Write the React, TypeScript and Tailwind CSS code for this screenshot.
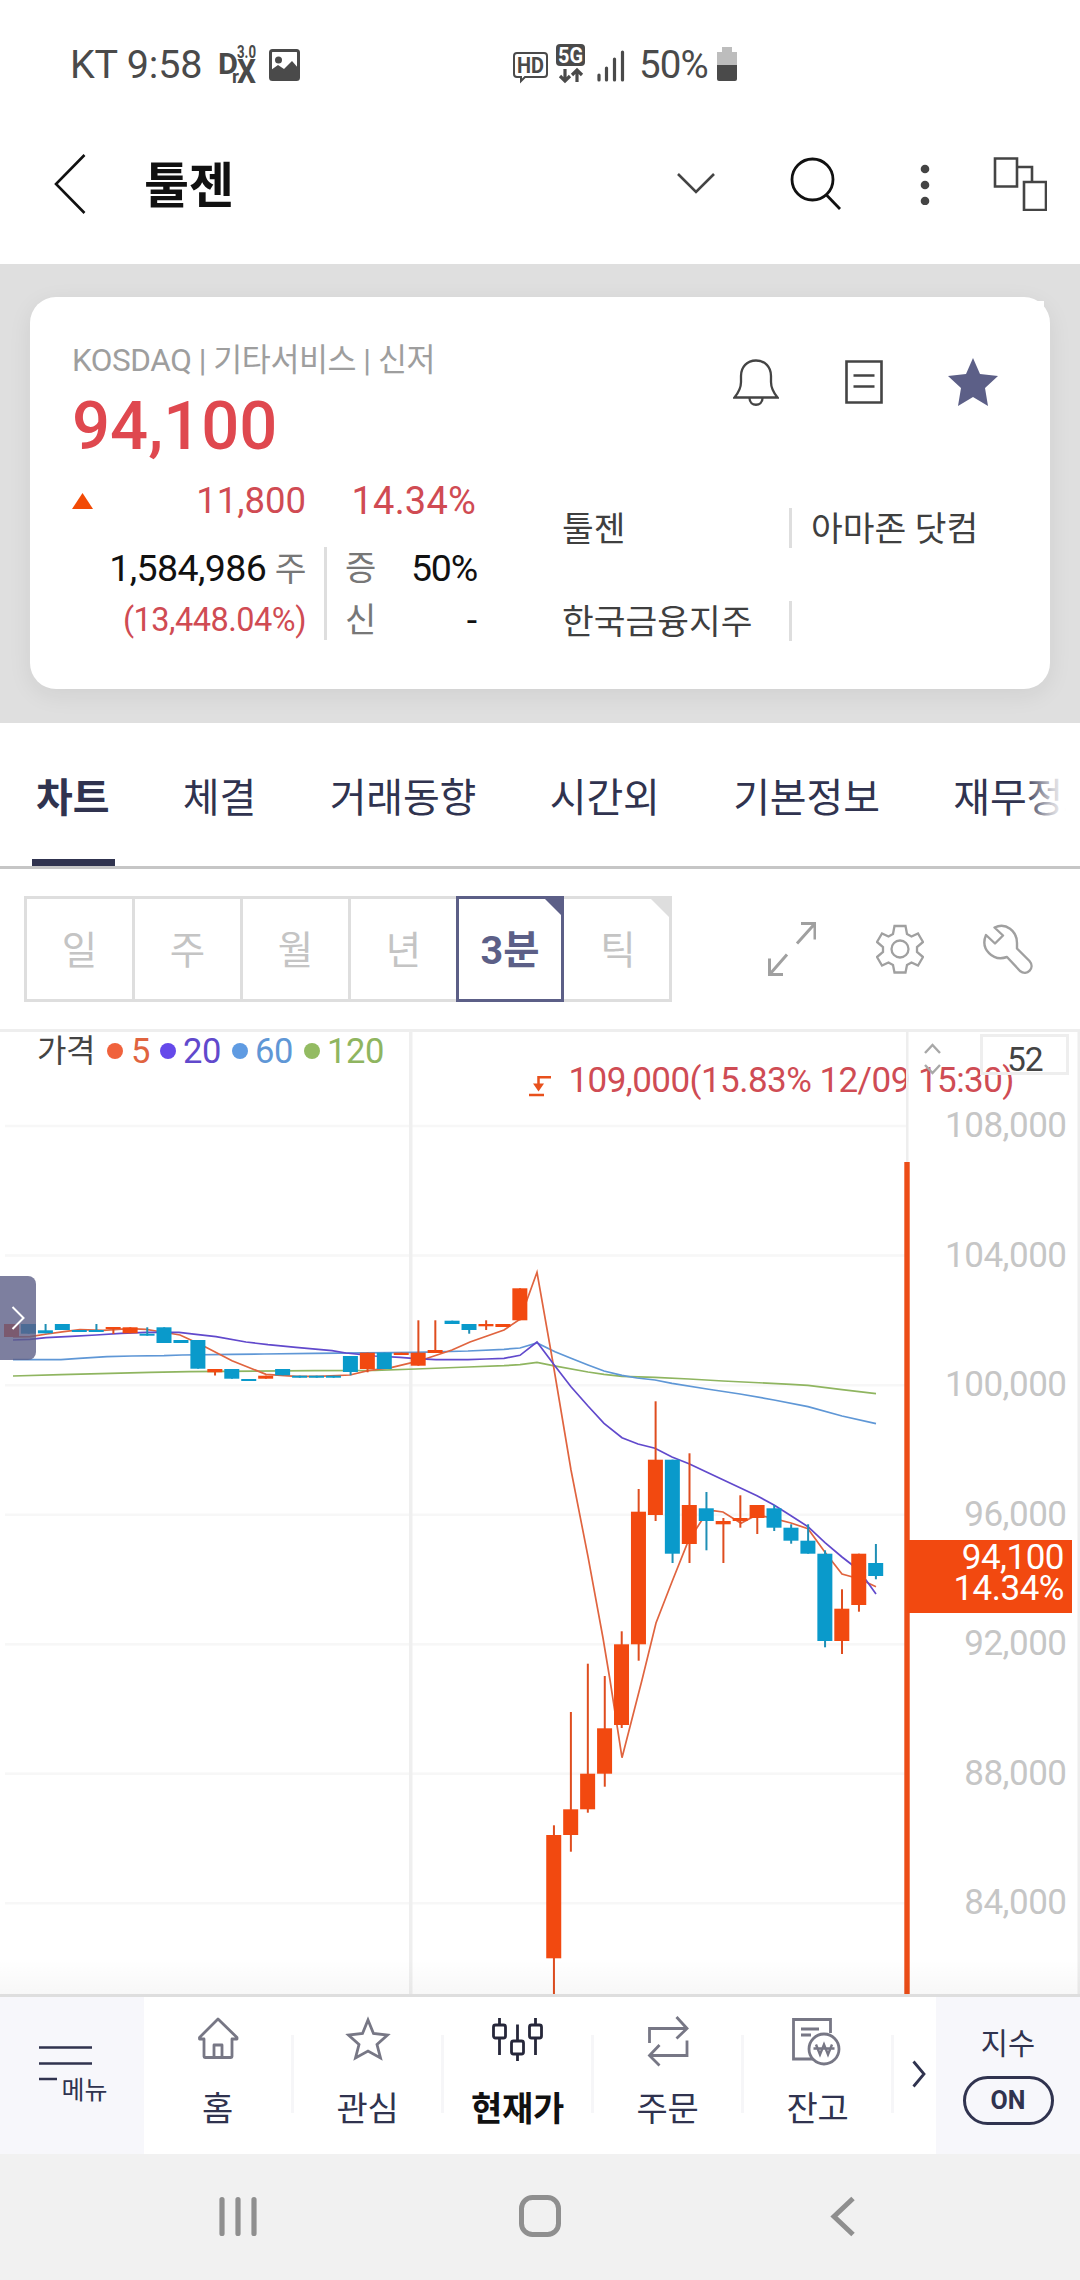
import type { ReactNode } from "react";

type Candle = {
  i: number;
  up: boolean;
  top: number;
  bottom: number;
  high?: number;
  low?: number;
};

const CANDLES: Candle[] = [
  { i: 0, up: true, top: 1324, bottom: 1337 },
  { i: 1, up: false, top: 1324, bottom: 1333.7 },
  { i: 2, up: false, top: 1330.3, bottom: 1333.3, high: 1324 },
  { i: 3, up: false, top: 1324, bottom: 1330 },
  { i: 4, up: false, top: 1330, bottom: 1332 },
  { i: 5, up: false, top: 1330, bottom: 1332, high: 1324 },
  { i: 6, up: true, top: 1327, bottom: 1329, low: 1334 },
  { i: 7, up: true, top: 1327.3, bottom: 1333.3 },
  { i: 8, up: false, top: 1333.7, bottom: 1335.7, high: 1327.3 },
  { i: 9, up: false, top: 1327.3, bottom: 1343 },
  { i: 10, up: false, top: 1340, bottom: 1343 },
  { i: 11, up: false, top: 1340, bottom: 1368.7 },
  { i: 12, up: true, top: 1369, bottom: 1372.3, low: 1375.5 },
  { i: 13, up: false, top: 1369, bottom: 1378.7 },
  { i: 14, up: false, top: 1379, bottom: 1381 },
  { i: 15, up: true, top: 1375.7, bottom: 1378.7 },
  { i: 16, up: false, top: 1369, bottom: 1375.3 },
  { i: 17, up: false, top: 1375.7, bottom: 1377.7 },
  { i: 18, up: false, top: 1375.7, bottom: 1377.7 },
  { i: 19, up: false, top: 1375.7, bottom: 1377.7 },
  { i: 20, up: false, top: 1356, bottom: 1372, low: 1375.3 },
  { i: 21, up: true, top: 1352.7, bottom: 1369, low: 1372.3 },
  { i: 22, up: false, top: 1352.7, bottom: 1369 },
  { i: 23, up: true, top: 1352.7, bottom: 1355 },
  { i: 24, up: true, top: 1352.7, bottom: 1365.7, high: 1320.3 },
  { i: 25, up: true, top: 1350, bottom: 1353, high: 1320.3 },
  { i: 26, up: false, top: 1320.7, bottom: 1324 },
  { i: 27, up: false, top: 1324, bottom: 1330, low: 1333.7 },
  { i: 28, up: true, top: 1324, bottom: 1326.3, high: 1320.3, low: 1330 },
  { i: 29, up: true, top: 1324, bottom: 1327 },
  { i: 30, up: true, top: 1288.3, bottom: 1320.3 },
  { i: 32, up: true, top: 1835, bottom: 1958.3, high: 1825.3, low: 1994 },
  { i: 33, up: true, top: 1809.3, bottom: 1835, high: 1712, low: 1851.7 },
  { i: 34, up: true, top: 1773.7, bottom: 1809.3, high: 1663.7, low: 1812.7 },
  { i: 35, up: true, top: 1728.3, bottom: 1773.7, high: 1676, low: 1786.7 },
  { i: 36, up: true, top: 1644.3, bottom: 1725, high: 1631.3, low: 1728 },
  { i: 37, up: true, top: 1511.7, bottom: 1644.3, high: 1489, low: 1660.7 },
  { i: 38, up: true, top: 1459.7, bottom: 1515, high: 1401.3, low: 1521 },
  { i: 39, up: false, top: 1459.7, bottom: 1553.7, low: 1563 },
  { i: 40, up: true, top: 1505, bottom: 1544, high: 1453.3, low: 1563 },
  { i: 41, up: false, top: 1508.3, bottom: 1521, high: 1492, low: 1550.3 },
  { i: 42, up: true, top: 1521, bottom: 1524.3, high: 1518, low: 1563 },
  { i: 43, up: true, top: 1518, bottom: 1521, high: 1495.3, low: 1527.7 },
  { i: 44, up: true, top: 1505, bottom: 1518, low: 1534 },
  { i: 45, up: false, top: 1508.3, bottom: 1527.7, high: 1505, low: 1531 },
  { i: 46, up: false, top: 1527.7, bottom: 1540.7, high: 1524.3, low: 1543.7 },
  { i: 47, up: false, top: 1540.7, bottom: 1553.7, high: 1524.3 },
  { i: 48, up: false, top: 1553.7, bottom: 1641, high: 1550.3, low: 1647.3 },
  { i: 49, up: true, top: 1608.7, bottom: 1641, high: 1589.3, low: 1654 },
  { i: 50, up: true, top: 1553.7, bottom: 1605, low: 1611.7 },
  { i: 51, up: false, top: 1563, bottom: 1576, high: 1544, low: 1579.3 },
];

const MA_LINES = [
  {
    color: "#8fb560",
    points:
      "13,1376 61,1374.7 150,1372.3 189,1371.7 314,1370.7 375,1370.3 416,1369 468,1367 504,1365.7 520,1364.7 537,1362.3 553,1365.7 588,1372 604,1374.3 622,1376.3 655,1377.3 689,1379 723,1381 791,1384.3 808,1385.3 842,1389.7 876,1393.7",
  },
  {
    color: "#5f97d6",
    points:
      "13,1359.7 61,1359.7 79,1358.3 107,1356.7 132,1356 164,1355.7 182,1355 232,1354.3 264,1354 314,1353.3 416,1352.3 468,1351 504,1349.3 520,1348 537,1343 555,1351.7 571,1358.3 588,1365 604,1371 622,1375.3 637,1378 655,1380 672,1383.3 707,1389 740,1394 774,1400 808,1406.7 842,1416 876,1423.7",
  },
  {
    color: "#e0643f",
    points:
      "13,1337 30,1336.7 47,1334 64,1331.7 80,1329.7 103,1330.3 129,1328.7 146,1329.3 156,1331 180,1335 193,1341 205,1346.7 232,1360.7 266,1374.3 296,1376.3 318,1376.3 350,1375 368,1370.7 391,1367.7 416,1361.7 425,1359 452,1350 470,1342 504,1330 520,1319.3 537,1272.3 553,1363 571,1470 588,1556.7 603,1638 610,1680 622,1757.7 642,1680 656,1623 672,1581.7 688,1541.7 700,1523 706,1514 713,1510.7 723,1512 741,1523.3 757,1514.7 774,1518.7 791,1523 808,1528.7 825,1552.3 842,1574 859,1578.7 876,1586.7",
  },
  {
    color: "#6149cc",
    points:
      "13,1340 30,1339.3 46,1337.7 71,1336.3 96,1335 121,1333.3 146,1332.3 179,1332.3 196,1334.3 216,1336.7 246,1342 268,1344.7 296,1347.3 332,1350.7 346,1353 375,1356 400,1357.3 416,1358.7 436,1359.7 468,1359.7 486,1359 504,1358.3 520,1355.3 537,1342 555,1366 571,1386.7 588,1406 604,1423.3 622,1437.7 638,1444 655,1448.3 672,1457 689,1463.7 707,1472.3 740,1487.7 757,1495.7 774,1505 791,1515.7 808,1526.7 825,1542.7 842,1557 851,1564 866,1580 876,1594",
  },
];

const PRICES = [
  { label: "108,000", y: 1126 },
  { label: "104,000", y: 1255.5 },
  { label: "100,000", y: 1385.2 },
  { label: "96,000", y: 1514.8 },
  { label: "92,000", y: 1644.3 },
  { label: "88,000", y: 1773.7 },
  { label: "84,000", y: 1903.2 },
];

function StatusBar() {
  return (
    <div className="flex h-[130px] items-center text-[#4a4a4a]">
      <span className="ml-[70px] w-[148px] text-[39.500px] leading-none tracking-[-0.200px] whitespace-nowrap">
        KT 9:58
      </span>
      <svg width="84" height="44" viewBox="217 43 84 44" className="shrink-0">
        <text x="217" y="74" fontSize="30" fontWeight="700" fill="#4a4a4a" textLength="20" lengthAdjust="spacingAndGlyphs">D</text>
        <text x="236" y="58" fontSize="17.500" fontWeight="700" fill="#4a4a4a" textLength="19" lengthAdjust="spacingAndGlyphs">3.0</text>
        <text x="231" y="83" fontSize="19" fontWeight="700" fill="#4a4a4a">r</text>
        <text x="236" y="83" fontSize="33" fontWeight="700" fill="#4a4a4a" textLength="19" lengthAdjust="spacingAndGlyphs">X</text>
        <rect x="269.500" y="50.500" width="28" height="29" rx="2" fill="none" stroke="#4a4a4a" strokeWidth="3" />
        <circle cx="277.500" cy="60" r="3.500" fill="#4a4a4a" />
        <path d="M270 70l7-5 6 4 8-8 7 8v11h-28z" fill="#4a4a4a" />
      </svg>
      <svg width="112" height="44" viewBox="513 43 112 44" className="ml-[211px] shrink-0">
        <path d="M517 53h27a3 3 0 0 1 3 3v18a3 3 0 0 1-3 3h-19l-4 4v-4h-4a3 3 0 0 1-3-3V56a3 3 0 0 1 3-3z" fill="none" stroke="#4a4a4a" strokeWidth="2" />
        <text x="517" y="73" fontSize="22" fontWeight="700" fill="#4a4a4a" textLength="27" lengthAdjust="spacingAndGlyphs">HD</text>
        <rect x="556" y="44" width="29" height="22" rx="4" fill="#4a4a4a" />
        <text x="558" y="63" fontSize="22" fontWeight="700" fill="#fff" textLength="25" lengthAdjust="spacingAndGlyphs">5G</text>
        <path d="M565 69v12M560 76l5 5 5-5M577 82V70M572 75l5-5 5 5" fill="none" stroke="#4a4a4a" strokeWidth="3.200" />
        <path d="M599 75v5M606.500 68v12M614.500 59v21M622.500 52v28" stroke="#4a4a4a" strokeWidth="3.200" strokeLinecap="round" />
      </svg>
      <span className="ml-[14px] w-[77px] text-[38.500px] leading-none tracking-[-0.900px]">50%</span>
      <svg width="22" height="36" viewBox="0 0 22 36" className="shrink-0">
        <path d="M6 0h10v5H6zM1 5h20v14H1z" fill="#bdbdbd" />
        <path d="M1 18h20v14a2 2 0 0 1-2 2H3a2 2 0 0 1-2-2z" fill="#4a4a4a" />
      </svg>
    </div>
  );
}

function Header() {
  return (
    <header className="flex h-[134px] items-center pr-[33px] pb-[26px] pl-[54px]">
      <svg width="32" height="60" viewBox="0 0 32 60" fill="none" stroke="#111" strokeWidth="2.600">
        <path d="M30.500 1L2 30l28.500 29" />
      </svg>
      <h1 className="ml-[58px] pt-[5px] text-[49px] leading-none font-bold tracking-[-0.200px] text-[#111]">
        툴젠
      </h1>
      <svg width="38" height="22" viewBox="0 0 38 22" fill="none" stroke="#444" strokeWidth="2.600" className="ml-auto">
        <path d="M1 1l18 18L37 1" />
      </svg>
      <svg width="52" height="54" viewBox="0 0 52 54" fill="none" stroke="#111" strokeWidth="2.800" className="ml-[75px]">
        <circle cx="22.500" cy="22.500" r="20.500" />
        <path d="M36.500 38L50 52" />
      </svg>
      <svg width="10" height="42" viewBox="0 0 10 42" fill="#444" className="ml-[78px]">
        <circle cx="5" cy="6" r="4.300" />
        <circle cx="5" cy="22" r="4.300" />
        <circle cx="5" cy="38" r="4.300" />
      </svg>
      <svg width="54" height="54" viewBox="993 157 54 54" fill="none" stroke="#444" strokeWidth="2.600" className="ml-[63px]">
        <path d="M995 158.500h22v28h-22zM1024 182h22v28h-22zM1017 167h15v15" />
      </svg>
    </header>
  );
}

function RelatedRow({ left, right }: { left: string; right?: string }) {
  return (
    <div className="flex h-[93px] items-center text-[34.500px] leading-none text-[#3f3f3f]">
      <span className="w-[227px] pt-[3px]">{left}</span>
      <span className="h-10 w-[3px] bg-[#dedede]" />
      <span className="ml-[19px] pt-[3px] whitespace-nowrap">{right}</span>
    </div>
  );
}

function SummaryCard() {
  return (
    <section className="h-[459px] bg-[#dfdfdf] px-[30px] pt-[33px]">
      <div className="relative flex h-[392px] rounded-[26px] bg-white pl-[42px] shadow-[0_6px_24px_rgba(0,0,0,0.07)]">
        <span className="absolute top-1 right-[6px] size-4 bg-white" />
        <div className="w-[490px] pt-[44px]">
          <p className="h-10 text-[31.500px] leading-10 tracking-[-0.450px] whitespace-nowrap text-[#9e9e9e]">
            KOSDAQ | 기타서비스 | 신저
          </p>
          <p className="h-[90px] text-[67px] leading-[90px] font-medium text-[#df484f]">94,100</p>
          <div className="flex h-[60px] items-center text-[36.500px] text-[#d04b53]">
            <svg width="21" height="16" viewBox="0 0 21 16">
              <path d="M10.500 0L21 16H0z" fill="#f24a05" />
            </svg>
            <span className="w-[213px] text-right">11,800</span>
            <span className="w-[170px] text-right text-[38px] tracking-[0.200px]">14.34%</span>
          </div>
          <div className="mt-[9px] flex h-[104px]">
            <div className="w-[234px] pt-0.5 text-right">
              <p className="h-[52px] text-[37.500px] leading-[52px] tracking-[-0.600px] text-[#111]">
                1,584,986 <span className="text-[34.500px] text-[#777]">주</span>
              </p>
              <p className="h-[52px] text-[32.500px] leading-[52px] tracking-[-0.500px] text-[#d04b53]">(13,448.04%)</p>
            </div>
            <div className="mt-[7px] ml-[18px] h-[93px] w-[3px] bg-[#dedede]" />
            <div className="ml-[18px] w-[132px] pt-0.5 text-[37.500px] text-[#111]">
              <p className="flex h-[52px] items-center justify-between">
                <span className="text-[34px] text-[#777]">증</span>
                <span className="tracking-[-1.200px]">50%</span>
              </p>
              <p className="flex h-[52px] items-center justify-between">
                <span className="text-[34px] text-[#777]">신</span>
                <span>-</span>
              </p>
            </div>
          </div>
        </div>
        <div className="pt-[57px]">
          <div className="flex h-[56px] items-center pl-[171px]">
            <svg width="46" height="48" viewBox="0 0 46 48" fill="none" stroke="#444" strokeWidth="2.300">
              <path d="M1.500 39.500C6 34 8 30 8 24v-6C8 9 14 2.500 23 2.500S38 9 38 18v6c0 6 2 10 6.500 15.500z" />
              <path d="M16.500 40c0 9 13 9 13 0" />
            </svg>
            <svg width="38" height="44" viewBox="0 0 38 44" fill="none" stroke="#444" strokeWidth="2.600" className="ml-[66px]">
              <path d="M1.500 1.500h35v41h-35zM8.500 15.500h21M8.500 26.500h21" />
            </svg>
            <svg width="50" height="48" viewBox="0 0 50 48" className="ml-[65px]">
              <path d="M25 0l7 16 18 2-13 12 3 18-15-9-15 9 3-18L0 18l18-2z" fill="#5c5f87" />
            </svg>
          </div>
          <div className="mt-[71px]">
            <RelatedRow left="툴젠" right="아마존 닷컴" />
            <RelatedRow left="한국금융지주" />
          </div>
        </div>
      </div>
    </section>
  );
}

function Tabs() {
  const tabs = ["체결", "거래동향", "시간외", "기본정보", "재무정보"];
  return (
    <nav className="relative flex h-[146px] gap-[73.500px] overflow-hidden border-b-[3px] border-[#c6c6c6] pl-9 text-[40px] leading-[152px] tracking-[-0.150px] whitespace-nowrap text-[#30334f]">
      <div className="relative font-bold">
        차트
        <span className="absolute bottom-0 left-[-4px] h-[7px] w-[83px] bg-[#30334f]" />
      </div>
      {tabs.map((t) => (
        <span key={t}>{t}</span>
      ))}
      <span className="absolute top-0 right-0 h-[143px] w-[56px] bg-linear-to-r from-transparent via-white/75 via-50% to-white to-75%" />
    </nav>
  );
}

function PeriodBar() {
  return (
    <div className="flex h-[160px] items-start pt-[27px] pl-6">
      <div className="flex h-[106px] w-[648px] text-[38.500px] text-[#c4c4c4]">
        {["일", "주", "월", "년"].map((p) => (
          <div key={p} className="flex w-[108px] items-center justify-center border-y-[3px] border-l-[3px] border-[#dedede] pt-[3px]">
            {p}
          </div>
        ))}
        <div className="relative flex w-[108px] items-center justify-center border-[3px] border-[#5c5f87] pt-[3px] text-[39.500px] font-bold text-[#5c5f87]">
          3분
          <svg width="20" height="20" viewBox="0 0 20 20" className="absolute top-[-2px] right-[-2px]">
            <path d="M0 0h20v20z" fill="#5c5f87" />
          </svg>
        </div>
        <div className="relative flex w-[108px] items-center justify-center border-y-[3px] border-r-[3px] border-[#dedede] pt-[3px] pl-[3px]">
          틱
          <svg width="22" height="22" viewBox="0 0 22 22" className="absolute top-[-2px] right-[-2px]">
            <path d="M0 0h22v22z" fill="#dedede" />
          </svg>
        </div>
      </div>
      <svg width="48" height="54" viewBox="768 922 48 54" fill="none" stroke="#a0a0a0" strokeWidth="3" className="mt-[26px] ml-24">
        <path d="M801 923.500h14v16M814.500 924L797 943.500M783 974.500h-13.500v-16M770 974l17-19.500" />
      </svg>
      <svg width="48" height="50" viewBox="876 924 48 50" fill="none" stroke="#a0a0a0" strokeWidth="2.300" className="mt-7 ml-[60px]">
        <path d="M894.500 926h11l1.500 8 4.500 2.500 6.500-3 5 8.500-6 5v5l6 5-5 8.500-6.500-3-4.500 2.500-1.500 7.500h-11l-1.500-7.500-4.500-2.500-6.500 3-5-8.500 6-5v-5l-6-5 5-8.500 6.500 3 4.500-2.500z" />
        <circle cx="900" cy="949" r="8.500" />
      </svg>
      <svg width="50" height="50" viewBox="983 924 50 50" fill="none" stroke="#a0a0a0" strokeWidth="2.400" strokeLinejoin="round" className="mt-7 ml-[59px]">
        <path d="M994.500 927.500C1006 922 1017 931 1017 943v5.500l12.500 12.500c6 7-2.500 15.500-9.500 10l-13-14c-14 5-27-8-21-22l9 8.500 8-8z" />
      </svg>
    </div>
  );
}

function Legend() {
  return (
    <div className="absolute top-0 left-[37px] flex h-[44px] items-center text-[34.500px] leading-none tracking-[-0.300px]">
      <span className="mr-3 text-[32px] tracking-[-0.500px] text-[#444]">가격</span>
      <span className="mr-2 size-4 rounded-full bg-[#f0623c]" />
      <span className="w-[29px] text-[#e0643f]">5</span>
      <span className="mr-[7px] size-4 rounded-full bg-[#6549ea]" />
      <span className="w-[49px] text-[#6149cc]">20</span>
      <span className="mr-[7px] size-4 rounded-full bg-[#5f9be2]" />
      <span className="w-[49px] text-[#5f97d6]">60</span>
      <span className="mr-[7px] size-4 rounded-full bg-[#93bb62]" />
      <span className="text-[#8fb560]">120</span>
    </div>
  );
}

function Chart() {
  return (
    <section className="relative h-[965px]">
      <svg width="1080" height="965" viewBox="0 1029 1080 965" className="block">
        <defs>
          <linearGradient id="foot" x1="0" y1="0" x2="0" y2="1">
            <stop offset="0" stopColor="#000" stopOpacity="0" />
            <stop offset="1" stopColor="#000" stopOpacity="0.030" />
          </linearGradient>
        </defs>
        <rect x="0" y="1029" width="1080" height="3" fill="#eee" />
        {PRICES.map((p) => (
          <g key={p.label}>
            <rect x="5" y={p.y - 1.3} width="902" height="2.600" fill="#f7f7f7" />
            <text x="1066.500" y={p.y + 11} textAnchor="end" fontSize="35" letterSpacing="-0.500" fill="#c6c6c6">
              {p.label}
            </text>
          </g>
        ))}
        <rect x="409" y="1031" width="3.500" height="963" fill="#efefef" />
        <rect x="1077.500" y="1031" width="2.500" height="963" fill="#eee" />
        {MA_LINES.map((l) => (
          <polyline key={l.color} points={l.points} fill="none" stroke={l.color} strokeWidth="1.700" />
        ))}
        {CANDLES.map((c) => {
          const x = 11.5 + c.i * 16.945;
          const high = c.high ?? c.top;
          const low = c.low ?? c.bottom;
          return (
            <g key={c.i} fill={c.up ? "#f24910" : "#0a9acb"}>
              <rect x={x - 0.8} y={high} width="2" height={low - high} fill={c.up ? "#df4d1f" : "#1f8fb5"} />
              <rect x={x - 7.5} y={c.top} width="15" height={c.bottom - c.top} />
            </g>
          );
        })}
        <path d="M529 1095h15M551 1077.200h-12.500v9" fill="none" stroke="#e8501c" strokeWidth="2.500" />
        <path d="M533 1083.500h11l-5.500 8z" fill="#e8501c" />
        <text x="568.500" y="1092" fontSize="35" fill="#cf4c54" textLength="446">
          109,000(15.83% 12/09 15:30)
        </text>
        <rect x="906" y="1031" width="2.500" height="963" fill="#eee" />
        <rect x="904.300" y="1162" width="5.400" height="832" fill="#ec4d17" />
        <path d="M925 1053l7.500-8 7.500 8M925 1065l7.500 8 7.500-8" fill="none" stroke="#a8a8a8" strokeWidth="2.400" />
        <rect x="981.500" y="1035.500" width="86" height="38" fill="none" stroke="#eee" strokeWidth="3" />
        <text x="1007" y="1071" fontSize="33.500" letterSpacing="-1.200" fill="#444">52</text>
        <rect x="907" y="1540" width="165" height="73" fill="#f24910" />
        <text x="1064" y="1569" textAnchor="end" fontSize="35" letterSpacing="-0.500" fill="#fff">94,100</text>
        <text x="1064" y="1600" textAnchor="end" fontSize="35" letterSpacing="-0.500" fill="#fff">14.34%</text>
        <rect x="0" y="1960" width="1080" height="34" fill="url(#foot)" />
      </svg>
      <Legend />
      <button className="absolute top-[247px] left-0 flex h-[84px] w-9 items-center justify-center rounded-r-lg bg-[#5c5f87]/80">
        <svg width="14" height="24" viewBox="0 0 14 24" fill="none" stroke="#fff" strokeWidth="2">
          <path d="M1.500 1L12.500 12l-11 11" />
        </svg>
      </button>
    </section>
  );
}

function NavItem({ label, active, children }: { label: string; active?: boolean; children: ReactNode }) {
  return (
    <div className="flex w-[150px] shrink-0 items-start">
      <div className="flex flex-1 flex-col items-center pt-[18px]">
        <svg width="52" height="52" viewBox="0 0 52 52" fill="none" stroke={active ? "#26273a" : "#777785"} strokeWidth="2.800">
          {children}
        </svg>
        <span className={`mt-[20px] h-[44px] text-[34px] leading-[44px] tracking-[-0.300px] whitespace-nowrap ${active ? "font-bold text-[#111]" : "text-[#30334f]"}`}>
          {label}
        </span>
      </div>
      <span className="mt-[38px] h-[78px] w-[3px] bg-[#f6f6f8]" />
    </div>
  );
}

function BottomNav() {
  return (
    <nav className="flex h-[160px] border-t-[3px] border-[#dedede]">
      <div className="w-36 bg-[#f7f7fb] pt-[49px] pl-[39px]">
        <svg width="70" height="56" viewBox="0 0 70 56" className="overflow-visible">
          <path d="M0 1.500h53M0 17.500h53M0 33h18" stroke="#30334f" strokeWidth="2.500" />
          <text x="22.500" y="53" fontSize="25" fill="#30334f">메뉴</text>
        </svg>
      </div>
      <div className="flex flex-1">
        <NavItem label="홈">
          <path d="M26 4L7.500 22.500V24H12v17.500a1 1 0 0 0 1 1h26a1 1 0 0 0 1-1V24h5v-1.500zM22 42V30h8v12" strokeLinejoin="round" />
        </NavItem>
        <NavItem label="관심">
          <path d="M26 5l5.500 13.500 14 1.500-10.500 9.500 3.500 13.500L26 36 13.500 43l3.500-13.500L6.500 20l14-1.500z" />
        </NavItem>
        <NavItem label="현재가" active>
          <rect x="1.500" y="10" width="12" height="13" rx="2" />
          <rect x="19.500" y="26" width="12" height="13" rx="2" />
          <rect x="37.500" y="10" width="12" height="13" rx="2" />
          <path d="M7.500 3v7M7.500 23v17M25.500 9.500V26M25.500 39v7M43.500 3v7M43.500 23v17" />
        </NavItem>
        <NavItem label="주문">
          <path d="M7.500 28V13.500H45M34.500 2L45 13.500 34.500 23.500M45 25.500v15H7.500M17.500 30L7.500 40.500l10 10" />
        </NavItem>
        <NavItem label="잔고">
          <path d="M38.500 18V4.500h-37V44H21M9 14h18M9 20h10" />
          <circle cx="32" cy="34" r="15" />
          <path d="M24 29.500l4 10 4-10 4 10 4-10M21.500 33.500h21" strokeWidth="2.400" />
        </NavItem>
        <svg width="14" height="28" viewBox="0 0 14 28" fill="none" stroke="#30334f" strokeWidth="2.800" className="mt-[63px] ml-[18px] shrink-0">
          <path d="M1.500 1.500L12 14 1.500 26.500" />
        </svg>
      </div>
      <div className="flex w-36 flex-col items-center bg-[#f7f7fb] pt-[28px] text-[#30334f]">
        <span className="h-[38px] text-[29.500px] leading-[38px]">지수</span>
        <span className="mt-[13px] flex h-[49px] w-[91px] items-center justify-center rounded-full border-[3px] border-[#30334f] text-[25px] font-bold">
          ON
        </span>
      </div>
    </nav>
  );
}

function SystemBar() {
  return (
    <div className="flex h-[126px] items-start bg-[#f1f1f1] pt-[41px] pl-[219px]">
      <svg width="38" height="42" viewBox="0 0 38 42" stroke="#8f8f8f" strokeWidth="5.200" strokeLinecap="round">
        <path d="M3 4.500v34M19 4.500v34M35 4.500v34" />
      </svg>
      <svg width="42" height="42" viewBox="0 0 42 42" fill="none" stroke="#8f8f8f" strokeWidth="5" className="ml-[262px]">
        <rect x="2.500" y="2.500" width="37" height="37" rx="11" />
      </svg>
      <svg width="26" height="42" viewBox="0 0 26 42" fill="none" stroke="#8f8f8f" strokeWidth="5" className="ml-[269px]">
        <path d="M23 3.500L4 21.500 23 39.500" />
      </svg>
    </div>
  );
}

export default function App() {
  return (
    <div className="h-[2280px] w-[1080px] overflow-hidden bg-white font-['Roboto','Noto_Sans_CJK_KR',sans-serif]">
      <StatusBar />
      <Header />
      <SummaryCard />
      <Tabs />
      <PeriodBar />
      <Chart />
      <BottomNav />
      <SystemBar />
    </div>
  );
}
